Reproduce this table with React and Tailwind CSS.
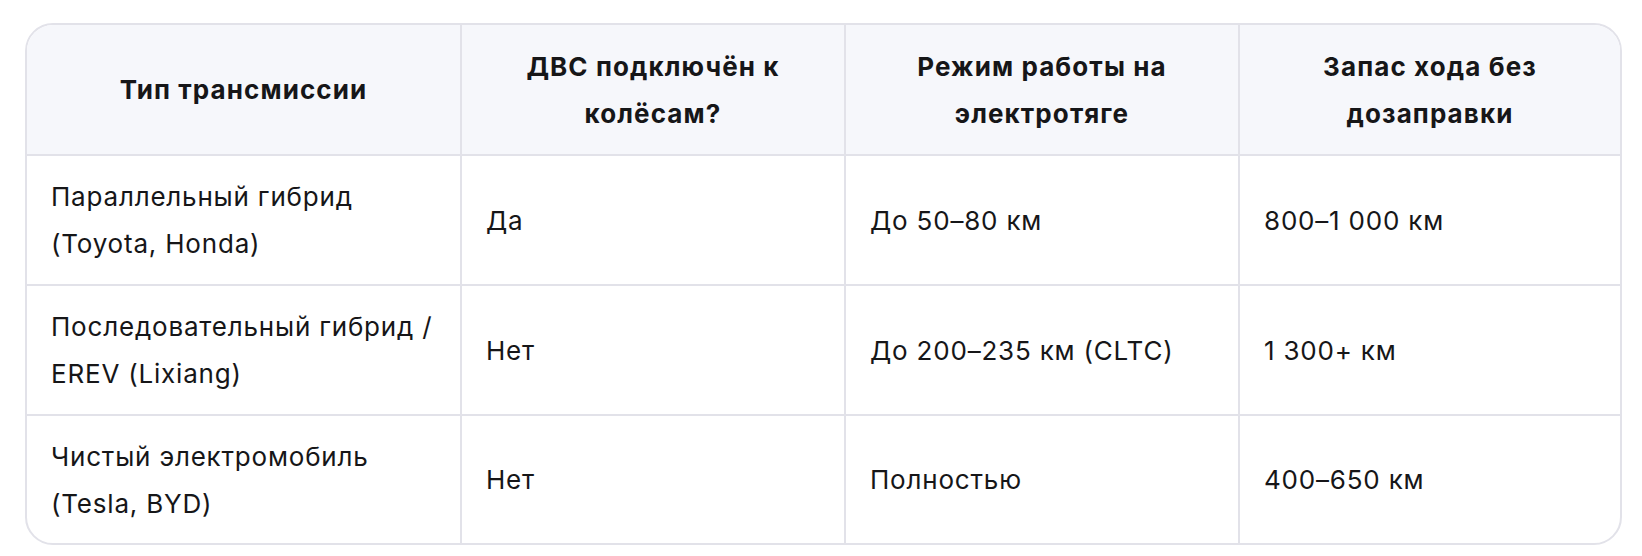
import React from "react";

const rows = [
  [["Параллельный гибрид", "(Toyota, Honda)"], ["Да"], ["До 50–80 км"], ["800–1 000 км"]],
  [["Последовательный гибрид /", "EREV (Lixiang)"], ["Нет"], ["До 200–235 км (CLTC)"], ["1 300+ км"]],
  [["Чистый электромобиль", "(Tesla, BYD)"], ["Нет"], ["Полностью"], ["400–650 км"]],
];

const headers = [
  ["Тип трансмиссии"],
  ["ДВС подключён к", "колёсам?"],
  ["Режим работы на", "электротяге"],
  ["Запас хода без", "дозаправки"],
];

function Lines({ lines }) {
  return lines.map((l, i) => (
    <React.Fragment key={i}>
      {i > 0 && <br />}
      {l}
    </React.Fragment>
  ));
}

export default function App() {
  return (
    <div className="bg-white w-[1642px] h-[556px] pt-[23px] pl-[25px]" style={{ fontFamily: "Inter, 'Noto Sans', sans-serif" }}>
      <div className="w-[1597px] border-2 border-[#e2e2e9] rounded-[28px] overflow-hidden">
        <table className="w-full table-fixed border-collapse text-[26px] leading-[47px] tracking-[0.8px] text-[#161618]">
          <colgroup>
            <col className="w-[434px]" />
            <col className="w-[384px]" />
            <col className="w-[394px]" />
            <col />
          </colgroup>
          <thead>
            <tr className="bg-[#f6f7fb] h-[130px]">
              {headers.map((h, i) => (
                <th
                  key={i}
                  className={`font-bold text-center align-middle whitespace-nowrap tracking-[1.1px] border-b-2 border-[#e2e2e9] ${i < 3 ? "border-r-2" : ""}`}
                >
                  <Lines lines={h} />
                </th>
              ))}
            </tr>
          </thead>
          <tbody>
            {rows.map((r, ri) => (
              <tr key={ri} className={ri < 2 ? "h-[130px]" : "h-[128px]"}>
                {r.map((c, ci) => (
                  <td
                    key={ci}
                    className={`align-middle whitespace-nowrap pl-[24px] pr-[8px] border-[#e2e2e9] ${ci < 3 ? "border-r-2" : ""} ${ri < 2 ? "border-b-2" : ""}`}
                  >
                    <Lines lines={c} />
                  </td>
                ))}
              </tr>
            ))}
          </tbody>
        </table>
      </div>
    </div>
  );
}
